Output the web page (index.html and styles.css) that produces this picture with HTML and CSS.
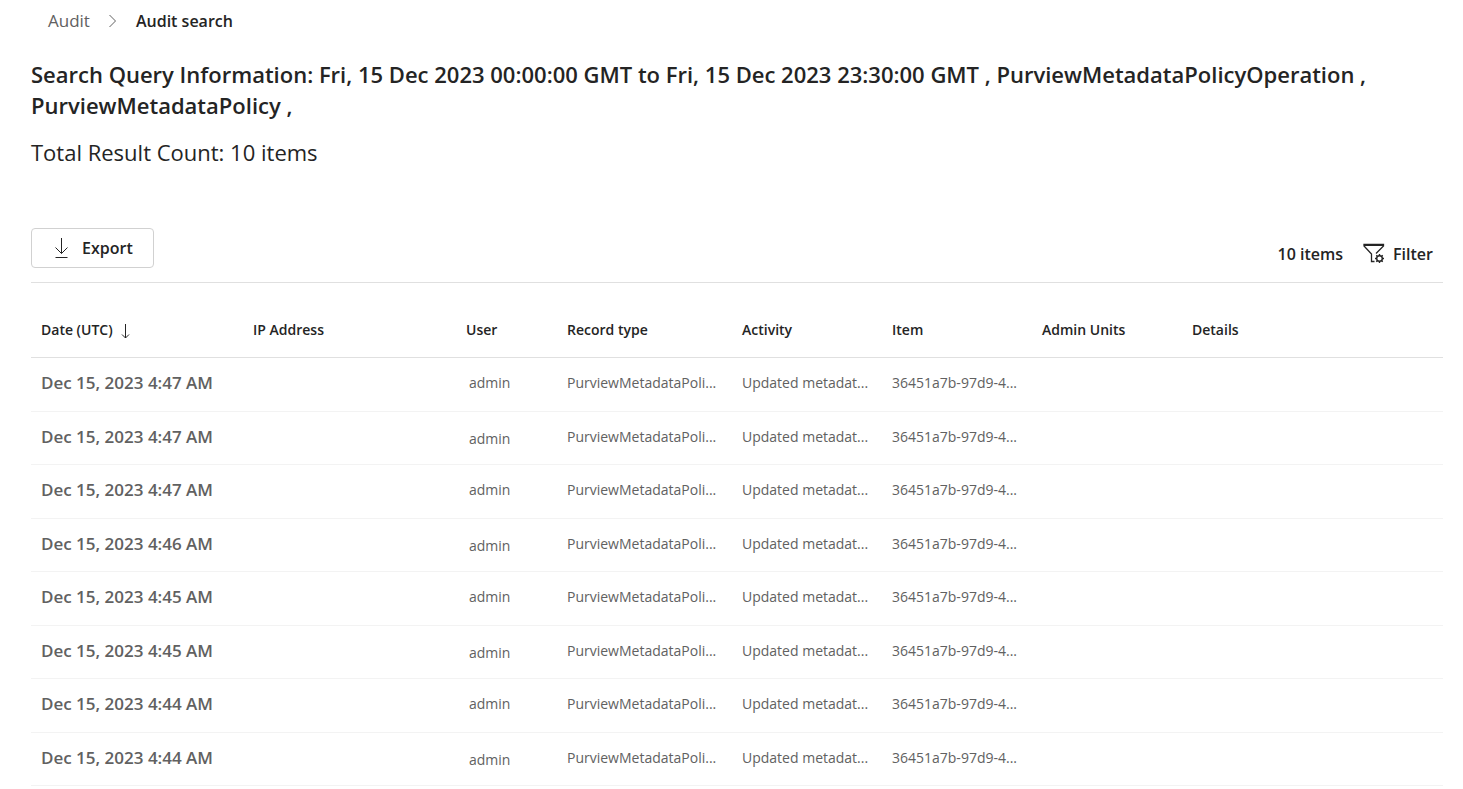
FILE: index.html
```
<!DOCTYPE html>
<html lang="en">
<head>
  <meta charset="UTF-8" />
  <meta name="viewport" content="width=device-width, initial-scale=1.0" />
  <title>Audit search</title>
  <link rel="stylesheet" href="styles.css">
</head>
<body>
  <nav class="breadcrumb" aria-label="Breadcrumb">
    <a href="#">Audit</a>
    <svg class="chevron" width="10" height="14" viewBox="0 0 10 14" aria-hidden="true"><path d="M1.5 1l6 6-6 6" /></svg>
    <span class="current">Audit search</span>
  </nav>

  <main class="page">
    <h1>Search Query Information: Fri, 15 Dec 2023 00:00:00 GMT to Fri, 15 Dec 2023 23:30:00 GMT , PurviewMetadataPolicyOperation , PurviewMetadataPolicy ,</h1>
    <p class="total">Total Result Count: 10 items</p>

    <div class="toolbar">
      <button type="button" class="export-btn">
        <svg width="16" height="22" viewBox="0 0 16 22" aria-hidden="true"><path d="M8.500 1v15.500M2.500 10.500l6 6 6-6M2.500 20.500h12" /></svg>
        Export
      </button>
      <div class="toolbar-right">
        <span>10 items</span>
        <button type="button" class="filter-btn">
          <svg width="22" height="22" viewBox="0 0 22 22" aria-hidden="true">
            <path d="M11.500 18.500H8.500V11L1 3V1.500H20.500V3L13 10.500" stroke-width="1.300" />
            <path d="M1 2.500H20.500" />
            <circle cx="16.500" cy="15.500" r="2.800" stroke-width="1.400" />
            <path d="M16.500 11v1.700M16.500 18.300V20M12 15.500h1.700M19.300 15.500H21M13.300 12.300l1.200 1.200M18.500 17.500l1.200 1.200M13.300 18.700l1.200-1.200M18.500 13.500l1.200-1.200" stroke-width="1.400" />
          </svg>
          Filter
        </button>
      </div>
    </div>

    <table class="results">
      <colgroup>
        <col class="col-date">
        <col class="col-ip">
        <col class="col-user">
        <col class="col-record">
        <col class="col-mid">
        <col class="col-mid">
        <col class="col-mid">
        <col>
      </colgroup>
      <thead>
        <tr>
          <th aria-sort="descending">Date (UTC) <svg class="sort" width="11" height="16" viewBox="0 0 11 16" aria-hidden="true"><path d="M5.500 1v14M2 11.500l3.500 3.500L9 11.500" /></svg></th>
          <th>IP Address</th>
          <th>User</th>
          <th>Record type</th>
          <th>Activity</th>
          <th>Item</th>
          <th>Admin Units</th>
          <th>Details</th>
        </tr>
      </thead>
      <tbody>
        <tr><td class="date">Dec 15, 2023 4:47 AM</td><td></td><td class="user">admin</td><td>PurviewMetadataPoli...</td><td>Updated metadat...</td><td>36451a7b-97d9-4...</td><td></td><td></td></tr>
        <tr><td class="date">Dec 15, 2023 4:47 AM</td><td></td><td class="user">admin</td><td>PurviewMetadataPoli...</td><td>Updated metadat...</td><td>36451a7b-97d9-4...</td><td></td><td></td></tr>
        <tr><td class="date">Dec 15, 2023 4:47 AM</td><td></td><td class="user">admin</td><td>PurviewMetadataPoli...</td><td>Updated metadat...</td><td>36451a7b-97d9-4...</td><td></td><td></td></tr>
        <tr><td class="date">Dec 15, 2023 4:46 AM</td><td></td><td class="user">admin</td><td>PurviewMetadataPoli...</td><td>Updated metadat...</td><td>36451a7b-97d9-4...</td><td></td><td></td></tr>
        <tr><td class="date">Dec 15, 2023 4:45 AM</td><td></td><td class="user">admin</td><td>PurviewMetadataPoli...</td><td>Updated metadat...</td><td>36451a7b-97d9-4...</td><td></td><td></td></tr>
        <tr><td class="date">Dec 15, 2023 4:45 AM</td><td></td><td class="user">admin</td><td>PurviewMetadataPoli...</td><td>Updated metadat...</td><td>36451a7b-97d9-4...</td><td></td><td></td></tr>
        <tr><td class="date">Dec 15, 2023 4:44 AM</td><td></td><td class="user">admin</td><td>PurviewMetadataPoli...</td><td>Updated metadat...</td><td>36451a7b-97d9-4...</td><td></td><td></td></tr>
        <tr><td class="date">Dec 15, 2023 4:44 AM</td><td></td><td class="user">admin</td><td>PurviewMetadataPoli...</td><td>Updated metadat...</td><td>36451a7b-97d9-4...</td><td></td><td></td></tr>
      </tbody>
    </table>
  </main>
</body>
</html>
```
FILE: styles.css
```
body {
  margin: 0;
  background-color: #fff;
  color: #242424;
  font-family: "Segoe UI", "Open Sans", sans-serif;
  font-size: 14px;
}

svg {
  fill: none;
  stroke: #242424;
  flex: none;
}

.breadcrumb {
  display: flex;
  align-items: center;
  padding: 9px 48px 0;
  font-size: 17px;
  line-height: 24px;
}

.breadcrumb a {
  color: #616161;
  text-decoration: none;
}

.chevron {
  margin: 0 18px;
  stroke: #616161;
}

.current {
  font-size: 16px;
  font-weight: 600;
}

.page {
  padding: 26px 20px 0 31px;
}

h1 {
  margin: 0;
  font-size: 22px;
  font-weight: 600;
  line-height: 31px;
}

.total {
  margin: 16px 0 0;
  font-size: 22px;
  line-height: 31px;
}

.toolbar {
  display: flex;
  align-items: flex-start;
  justify-content: space-between;
  margin-top: 60px;
  padding-bottom: 14px;
  border-bottom: 1px solid #e0e0e0;
}

button {
  display: flex;
  align-items: center;
  background: none;
  border: none;
  padding: 0;
  color: #242424;
  font-family: inherit;
  font-size: 16px;
  font-weight: 600;
  line-height: 24px;
  cursor: pointer;
}

.export-btn {
  gap: 13px;
  height: 40px;
  padding: 0 20px 0 21px;
  border: 1px solid #d1d1d1;
  border-radius: 4px;
}

.toolbar-right {
  display: flex;
  gap: 20px;
  padding: 14px 10px 0 0;
  font-size: 16px;
  font-weight: 600;
  line-height: 24px;
}

.filter-btn {
  gap: 8px;
}

.results {
  width: 100%;
  margin-top: 19px;
  table-layout: fixed;
  border-collapse: separate;
  border-spacing: 0;
}

.col-date {
  width: 212px;
}

.col-ip {
  width: 213px;
}

.col-user {
  width: 101px;
}

.col-record {
  width: 175px;
}

.col-mid {
  width: 150px;
}

th,
td {
  box-sizing: border-box;
  padding: 0 0 0 10px;
  text-align: left;
  white-space: nowrap;
}

th {
  height: 56px;
  border-bottom: 1px solid #e0e0e0;
  font-weight: 600;
}

.sort {
  margin-left: 4px;
  vertical-align: -4px;
}

td {
  height: 54px;
  padding-bottom: 4px;
  border-bottom: 1px solid #f3f3f3;
  color: #616161;
}

tbody tr:nth-child(even) td {
  height: 53px;
}

.date {
  font-size: 17px;
  font-weight: 600;
}

.user {
  padding-left: 13px;
}

tbody tr:nth-child(even) .user {
  padding-bottom: 0;
}
```
